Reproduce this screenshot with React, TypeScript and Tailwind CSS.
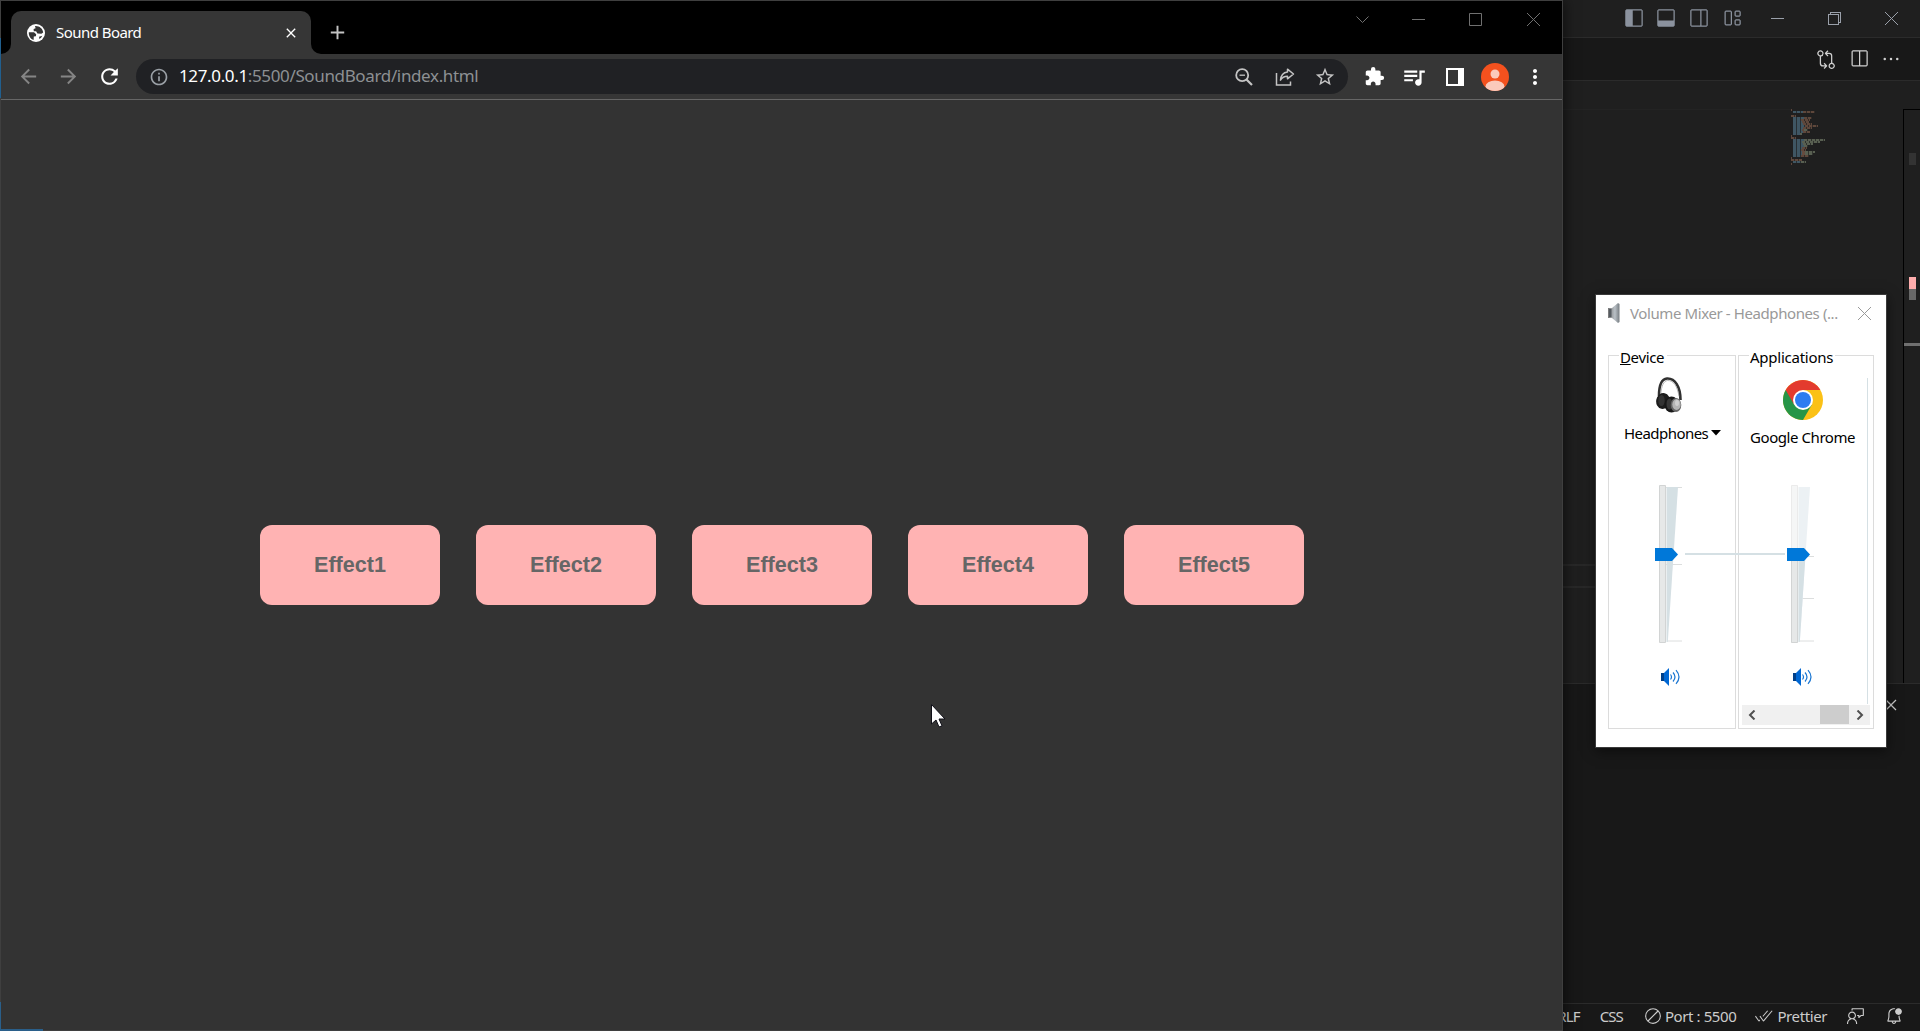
import type { ReactNode } from 'react';
import {
  VscLayoutSidebarLeft,
  VscLayoutPanel,
  VscLayoutSidebarRightOff,
  VscLayout,
  VscGitCompare,
  VscSplitHorizontal,
  VscEllipsis,
  VscClose,
  VscCircleSlash,
  VscCheckAll,
  VscFeedback,
  VscBellDot,
} from 'react-icons/vsc';
import {
  MdClose,
  MdAdd,
  MdArrowBack,
  MdArrowForward,
  MdRefresh,
  MdInfoOutline,
  MdStarBorder,
  MdExtension,
  MdQueueMusic,
  MdMoreVert,
} from 'react-icons/md';

function Slot({ w, children }: { w: string; children: ReactNode }) {
  return <div className={`${w} flex shrink-0 items-center justify-center`}>{children}</div>;
}

/* ---------- Editor window behind the browser ---------- */

// Each row: indent, blue run, warm run, pale run
const minimap: number[][] = [
  [0, 0, 1, 0], [2, 10, 12, 0], [0, 0, 0, 0], [0, 0, 5, 0],
  [2, 11, 8, 0], [2, 8, 9, 0], [2, 9, 7, 0], [2, 10, 9, 0],
  [2, 12, 13, 0], [2, 10, 9, 0], [2, 9, 2, 4], [2, 10, 7, 0], [2, 7, 0, 2],
  [0, 0, 1, 0], [0, 0, 5, 0], [2, 11, 0, 21], [2, 9, 0, 18],
  [2, 10, 0, 10], [2, 11, 0, 4], [2, 9, 5, 0], [2, 8, 5, 0], [2, 9, 3, 10],
  [2, 9, 3, 8], [2, 8, 8, 0], [0, 0, 1, 0], [0, 0, 11, 0], [2, 8, 0, 5], [0, 0, 1, 0],
];

function Minimap() {
  return (
    <svg width="40" height="58" viewBox="0 0 40 58">
      {minimap.map(([i, b, w, p], n) => {
        const y = n * 2 + 1;
        return (
          <g key={n} strokeWidth="1.7" strokeDasharray="3.3 .7">
            <path d={`M${i} ${y}h${b}`} stroke="#4b697b" />
            <path d={`M${i + b} ${y}h${w}`} stroke="#745546" />
            <path d={`M${i + b + w} ${y}h${p}`} stroke="#6c7563" />
          </g>
        );
      })}
    </svg>
  );
}

function Editor() {
  return (
    <div className="flex h-full w-full flex-col bg-[#1f1f1f] font-['Noto_Sans','Segoe_UI',sans-serif]">
      <div className="flex h-[38px] shrink-0 items-center justify-end border-b border-[#2b2b2b] pb-px text-[#8b929e]">
        <Slot w="w-[33px]"><VscLayoutSidebarLeft size={20} /></Slot>
        <Slot w="w-[32px]"><VscLayoutPanel size={20} /></Slot>
        <Slot w="w-[33px]"><VscLayoutSidebarRightOff size={20} /></Slot>
        <Slot w="w-[33px]"><VscLayout size={20} /></Slot>
        <Slot w="w-[58px]"><div className="h-px w-[13px] bg-[#9aa0aa]" /></Slot>
        <Slot w="w-[57px]">
          <svg width="13" height="13" viewBox="0 0 13 13" fill="none" stroke="#9aa0aa" shapeRendering="crispEdges">
            <path d="M.5 2.500h10v10h-10zM2.500 2.500v-2h10v10h-2" />
          </svg>
        </Slot>
        <Slot w="w-[57px]">
          <svg width="13" height="13" viewBox="0 0 13 13" stroke="#9aa0aa"><path d="M0 0l13 13M13 0L0 13" /></svg>
        </Slot>
      </div>
      <div className="flex h-[43px] shrink-0 items-center justify-end border-b border-[#2b2b2b] bg-[#181818] pr-[13px] text-[#d0d0d0]">
        <Slot w="w-[33px]"><VscGitCompare size={20} /></Slot>
        <Slot w="w-[33px]"><VscSplitHorizontal size={20} /></Slot>
        <Slot w="w-[32px]"><VscEllipsis size={20} /></Slot>
      </div>
      <div className="flex min-h-0 flex-1 pt-[28px]">
        <div className="flex-1 border-t border-[#232323] pt-[454px]">
          <div className="h-[24px] border-y-2 border-[#282828]" />
        </div>
        <div className="w-[112px]"><Minimap /></div>
        <div className="flex w-[17px] flex-col border-t border-l border-black">
          <div className="mt-[43px] ml-[5px] h-[12px] w-[7px] bg-[#333]" />
          <div className="mt-[112px] ml-[5px] h-[12px] w-[7px] bg-[#ffadad]" />
          <div className="ml-[5px] h-[11px] w-[7px] bg-[#686868]" />
          <div className="mt-[43px] h-[3px] bg-[#707070]" />
        </div>
      </div>
      <div className="flex h-[320px] shrink-0 justify-end border-t border-[#2b2b2b] bg-[#181818] pt-[11px] pr-[19px] text-[#ccc]">
        <VscClose size={20} />
      </div>
      <div className="flex h-[28px] shrink-0 items-center justify-end border-t border-[#2b2b2b] bg-[#181818] pb-[3px] text-[15px] text-[#ccc]">
        <span className="mr-[20px] tracking-[-0.9px]">CRLF</span>
        <span className="mr-[21px] tracking-[-0.9px]">CSS</span>
        <VscCircleSlash size={18} className="mr-[3px]" />
        <span className="mr-[19px] tracking-[-0.4px]">Port : 5500</span>
        <VscCheckAll size={18} className="mr-[4px]" />
        <span className="mr-[20px] tracking-[-0.4px]">Prettier</span>
        <VscFeedback size={18} className="mr-[20px]" />
        <VscBellDot size={18} className="mr-[17px]" />
      </div>
    </div>
  );
}

/* ---------- Browser window ---------- */

function Globe() {
  return (
    <svg width="18" height="18" viewBox="0 0 18 18">
      <circle cx="9" cy="9" r="9" fill="white" />
      <path
        fill="#363636"
        d="M1.800 8.200H7l2.200 2.100-.3 1.900-2.100.4-.2 3.400C3.700 15 1.600 12.300 1.800 8.200zM8 2.100C12.500 1.800 15.800 4.800 16.200 8.600l-1.800 1.200-4-.3-1.300-2.200H6.800L6.600 4.900l2-.6zM15.300 11.800a7 7 0 0 1-3 3.300l-.2-2.300z"
      />
    </svg>
  );
}

function TabStrip() {
  return (
    <div className="flex h-[53px] shrink-0 items-end bg-black">
      <div className="size-[10px] bg-[#363636]"><div className="size-full rounded-br-[10px] bg-black" /></div>
      <div className="flex h-[43px] w-[300px] items-center rounded-t-[10px] bg-[#363636] pl-[16px] text-white">
        <Globe />
        <span className="ml-[11px] flex-1 text-[15px] tracking-[-0.55px]">Sound Board</span>
        <MdClose size={16} className="mr-[12px]" />
      </div>
      <div className="size-[10px] bg-[#363636]"><div className="size-full rounded-bl-[10px] bg-black" /></div>
      <MdAdd size={23} className="mb-[10px] ml-[5px] text-[#c4c4c4]" />
      <div className="flex-1" />
      <div className="flex h-[53px] items-start pt-[12px] text-[#707070]">
        <Slot w="w-[56px]">
          <svg width="13" height="13" viewBox="0 0 13 13" fill="none" stroke="currentColor"><path d="M.5 3.500l6 6 6-6" /></svg>
        </Slot>
        <Slot w="w-[57px]">
          <svg width="13" height="13" viewBox="0 0 13 13" stroke="currentColor"><path d="M0 6.500h13" /></svg>
        </Slot>
        <Slot w="w-[57px]">
          <svg width="13" height="13" viewBox="0 0 13 13" fill="none" stroke="currentColor"><path d="M.5.5h12v12H.5z" /></svg>
        </Slot>
        <Slot w="w-[58px]">
          <svg width="13" height="13" viewBox="0 0 13 13" stroke="currentColor"><path d="M0 0l13 13M13 0L0 13" /></svg>
        </Slot>
      </div>
    </div>
  );
}

function Toolbar() {
  return (
    <div className="flex h-[46px] shrink-0 items-center border-b border-[#666] bg-[#363636]">
      <div className="flex w-[135px] pl-[7px]">
        <Slot w="w-[40px]"><MdArrowBack size={23} className="text-[#858585]" /></Slot>
        <Slot w="w-[41px]"><MdArrowForward size={23} className="text-[#858585]" /></Slot>
        <Slot w="w-[40px]"><MdRefresh size={25} className="text-white" /></Slot>
      </div>
      <div className="flex h-[35px] w-[1212px] items-center rounded-full bg-[#202124] pl-[13px] text-[#c4c4c4]">
        <MdInfoOutline size={20} className="text-[#9aa0a6]" />
        <span className="ml-[10px] flex-1 pb-px text-[17px] tracking-[-0.36px] text-[#8d9093]">
          <span className="text-white">127.0.0.1</span>:5500/SoundBoard/index.html
        </span>
        <Slot w="w-[40px]">
          <svg width="18" height="18" viewBox="0 0 18 18" fill="none" stroke="currentColor" strokeWidth="1.800">
            <circle cx="7.200" cy="7.200" r="6" />
            <path d="M4.500 7.200H10" strokeWidth="1.300" />
            <path d="M11.500 11.500l5.500 5.500" strokeWidth="2.200" />
          </svg>
        </Slot>
        <Slot w="w-[41px]">
          <svg width="20" height="20" viewBox="0 0 20 20" fill="none" stroke="currentColor" strokeWidth="1.500">
            <path d="M1.500 6v12h14v-3.500" />
            <path d="M12.500 2.200l6 4.800-6 4.800V9.300C9.500 9.300 7 10.500 5.500 13.200 5.800 9 8 5.400 12.500 4.900z" strokeLinejoin="round" />
          </svg>
        </Slot>
        <Slot w="w-[40px]"><MdStarBorder size={22} /></Slot>
        <div className="w-[3px]" />
      </div>
      <div className="flex items-center pl-[6px] text-white">
        <Slot w="w-[40px]"><MdExtension size={21} /></Slot>
        <Slot w="w-[40px]"><MdQueueMusic size={26} /></Slot>
        <Slot w="w-[41px]">
          <svg width="18" height="18" viewBox="0 0 18 18"><path fill="white" fillRule="evenodd" d="M0 0h18v18H0zM2 2v14h10V2z" /></svg>
        </Slot>
        <Slot w="w-[40px]">
          <svg width="28" height="28" viewBox="0 0 28 28">
            <clipPath id="avatar"><circle cx="14" cy="14" r="14" /></clipPath>
            <g clipPath="url(#avatar)">
              <path fill="#f4511e" d="M0 0h28v28H0z" />
              <circle cx="14" cy="11" r="4.500" fill="#fbcabb" />
              <ellipse cx="14" cy="23.500" rx="9.500" ry="6" fill="#fbcabb" />
            </g>
          </svg>
        </Slot>
        <Slot w="w-[39px]"><MdMoreVert size={24} /></Slot>
      </div>
    </div>
  );
}

function Browser() {
  return (
    <div className="absolute top-0 left-0 flex h-[1031px] w-[1563px] flex-col border border-[#3f3f3f] bg-[#333] font-['Noto_Sans','Segoe_UI',sans-serif] shadow-[2px_0_12px_rgba(0,0,0,0.5)]">
      <TabStrip />
      <Toolbar />
      <div className="flex flex-1 items-center justify-center gap-9">
        {['Effect1', 'Effect2', 'Effect3', 'Effect4', 'Effect5'].map((name) => (
          <button
            key={name}
            className="h-[80px] w-[180px] rounded-[12px] bg-[#ffb3b3] pl-px font-['Liberation_Sans',Arial,sans-serif] text-[21.6px] font-bold text-[#666]"
          >
            {name}
          </button>
        ))}
      </div>
      <div className="absolute top-[37px] -left-px h-[60px] w-px bg-[#215f8e]" />
      <div className="absolute -bottom-px -left-px h-[29px] w-[43px] border-b-2 border-l border-[#2a5f8a]" />
    </div>
  );
}

/* ---------- Volume mixer ---------- */

function Slider({ level }: { level: 'device' | 'app' }) {
  const app = level === 'app';
  return (
    <svg width="27" height="158" viewBox="0 0 27 158">
      <path d={app ? 'M12 71.500h12M9 113.500h15M9 156h15' : 'M7 2.500h17M7 79.500h17M9 156h15'} stroke="#dcdede" />
      <path d="M8.500 2h11.500L9.800 157H8.500z" fill={app ? '#ecf1f4' : '#d5e0e4'} />
      {app && <path d="M8.500 70h7L9.800 157H8.500z" fill="#d5e0e4" />}
      <path d="M1.500.500h6v157h-6z" fill={app ? '#f5f6f6' : '#e6e8e8'} stroke={app ? '#ebebeb' : '#d2d4d4'} />
      {app && <path d="M1.500 70h6v87.500h-6z" fill="#e6e8e8" stroke="#d2d4d4" />}
      <path d="M-3 63h17l6 6.500-6 6.500h-17z" fill="#0078d9" />
    </svg>
  );
}

function Speaker() {
  return (
    <svg width="20" height="18" viewBox="0 0 20 18" fill="none" stroke="#1a76d2" strokeWidth="1.200">
      <path d="M0 5h3v8H0z" fill="#00408a" stroke="none" />
      <path d="M3 5l5-5v18l-5-5z" fill="#0067d3" stroke="none" />
      <path d="M9.500 6.500q2 2.500 0 5M12 4.500q4 4.500 0 9M15 2.200q6 6.800 0 13.600" />
    </svg>
  );
}

function Headphones() {
  return (
    <svg width="28" height="36" viewBox="0 0 28 36" fill="none">
      <path d="M3 19C3 9 5 2 11 1.500 19 1 24.500 10 24.500 23" stroke="#303030" strokeWidth="2.600" />
      <path d="M4.800 17C5.500 9 7.500 4 11.500 3.500c6-.3 10 6 11.500 16" stroke="#999" strokeWidth=".7" />
      <ellipse cx="7" cy="24" rx="6.800" ry="8" fill="#1c1c1c" transform="rotate(12 7 24)" />
      <ellipse cx="5.500" cy="23.500" rx="3.200" ry="5.500" fill="#333" />
      <ellipse cx="15.500" cy="27.500" rx="7" ry="8" fill="#181818" />
      <ellipse cx="13.500" cy="27" rx="3" ry="5.500" fill="#383838" />
      <ellipse cx="20" cy="28" rx="5.300" ry="7" fill="#666" />
      <ellipse cx="20.500" cy="27.500" rx="4.200" ry="5.400" fill="#b5b5b5" />
      <ellipse cx="21" cy="26" rx="2" ry="3" fill="#d0d0d0" />
    </svg>
  );
}

function ChromeLogo() {
  return (
    <svg width="40" height="40" viewBox="0 0 48 48">
      <circle cx="24" cy="24" r="24" fill="#fbc116" />
      <path d="M3.220 12A24 24 0 0 0 24 48L34.400 30 24 24z" fill="#269547" />
      <path d="M3.220 12A24 24 0 0 1 44.780 12H24L13.600 30z" fill="#e33b2e" />
      <circle cx="24" cy="24" r="12" fill="#fff" />
      <circle cx="24" cy="24" r="9.600" fill="#2d7cf0" />
    </svg>
  );
}

function Mixer() {
  return (
    <div className="absolute top-[294px] left-[1595px] flex h-[454px] w-[292px] flex-col border border-[#3a3a3a] bg-white font-['Noto_Sans','Segoe_UI',sans-serif] text-[15px] leading-5 text-black shadow-[0_3px_12px_rgba(0,0,0,0.5)]">
      <div className="flex h-[38px] items-center pb-[2px] pl-[12px] text-[#999]">
        <svg width="12" height="20" viewBox="0 0 12 20">
          <defs>
            <linearGradient id="horn"><stop offset="0" stopColor="#777" /><stop offset=".6" stopColor="#b9c0c6" /><stop offset="1" stopColor="#777d82" /></linearGradient>
          </defs>
          <path d="M0 5h4l6-5 1.500 1v18l-1.500 1-6-5H0z" fill="url(#horn)" />
          <path d="M1 6h2.500v8H1z" fill="#555b60" />
        </svg>
        <span className="ml-[10px] flex-1 tracking-[-0.4px] whitespace-nowrap">Volume Mixer - Headphones (...</span>
        <svg className="mr-[15px]" width="13" height="13" viewBox="0 0 13 13" stroke="#999"><path d="M0 0l13 13M13 0L0 13" /></svg>
      </div>
      <div className="mt-[22px] flex h-[374px] gap-[2px] pl-[12px]">
        <fieldset className="flex w-[128px] flex-col border border-[#dcdcdc]">
          <span className="-mt-[9px] ml-[10px] w-[48px] bg-white pl-[1px] tracking-[-0.35px]"><u>D</u>evice</span>
          <div className="mt-[10px] ml-[47px]"><Headphones /></div>
          <div className="mt-[10px] ml-[15px] flex items-center">
            <span className="tracking-[-0.55px]">Headphones</span>
            <svg className="ml-[3px]" width="10" height="6" viewBox="0 0 10 6"><path d="M0 0h10L5 5.500z" /></svg>
          </div>
          <div className="mt-[42px] ml-[49px] h-[158px] [&>svg]:overflow-visible"><Slider level="device" /></div>
          <div className="mt-[25px] ml-[52px]"><Speaker /></div>
        </fieldset>
        <fieldset className="flex w-[136px] flex-col border border-[#dcdcdc]">
          <span className="-mt-[9px] ml-[10px] w-[86px] bg-white pl-[1px] tracking-[-0.25px]">Applications</span>
          <div className="mt-[11px] flex h-[326px] w-[129px] shrink-0 flex-col border-r border-[#d5e0e4]">
            <div className="mt-[2px] ml-[44px]"><ChromeLogo /></div>
            <span className="mt-[7px] ml-[11px] tracking-[-0.43px] whitespace-nowrap">Google Chrome</span>
            <div className="mt-[38px] ml-[51px] h-[158px] [&>svg]:overflow-visible"><Slider level="app" /></div>
            <div className="mt-[25px] ml-[54px]"><Speaker /></div>
          </div>
          <div className="mt-px ml-[3px] flex h-[20px] w-[128px] shrink-0 items-center bg-[#f0f0f0]">
            <svg className="ml-[6px]" width="8" height="10" viewBox="0 0 8 10" fill="none" stroke="#505050" strokeWidth="2"><path d="M6.500.500L2 5l4.500 4.500" /></svg>
            <div className="mb-px ml-[64px] h-[19px] w-[29px] bg-[#cdcdcd]" />
            <svg className="ml-[7px]" width="8" height="10" viewBox="0 0 8 10" fill="none" stroke="#505050" strokeWidth="2"><path d="M1.500.500L6 5 1.500 9.500" /></svg>
          </div>
        </fieldset>
      </div>
      <div className="absolute top-[258px] left-[89px] h-[2px] w-[100px] bg-[#d5e0e4]" />
    </div>
  );
}

export default function App() {
  return (
    <div className="relative h-[1031px] w-[1920px] overflow-hidden">
      <Editor />
      <Browser />
      <Mixer />
      <svg className="absolute top-[704px] left-[931px]" width="15" height="24" viewBox="0 0 15 24">
        <path d="M.5.5v19.500l4.500-4 3 7 3-1.200-3-6.800h6z" fill="white" stroke="#101018" />
      </svg>
    </div>
  );
}
